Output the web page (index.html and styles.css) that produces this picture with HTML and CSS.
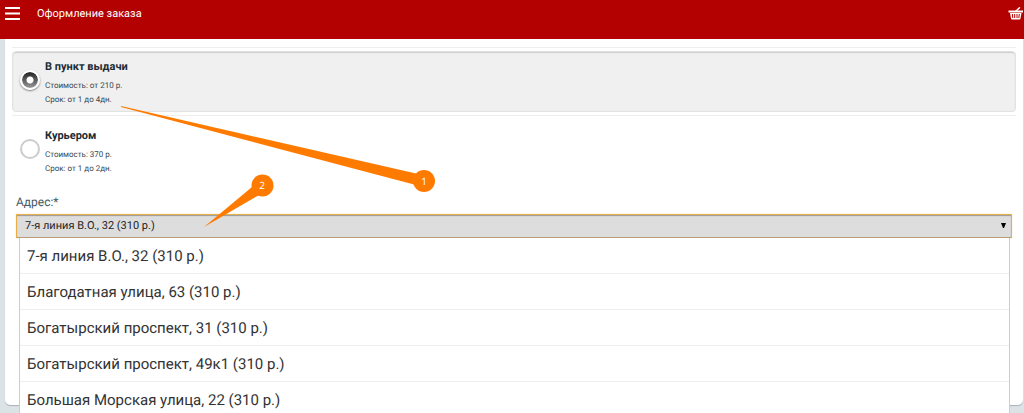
FILE: index.html
```html
<!DOCTYPE html>
<html lang="ru">
<head>
    <meta charset="UTF-8">
    <meta name="viewport" content="width=device-width, initial-scale=1">
    <title>Оформление заказа</title>
    <link rel="stylesheet" href="styles.css">
</head>
<body>
    <header class="topbar">
        <button type="button" class="icon-button" aria-label="Меню">
            <svg width="16" height="14" viewBox="0 0 16 14">
                <path d="M0 1h15M0 6.500h15M0 12h15" stroke="#fff" stroke-width="2" fill="none"/>
            </svg>
        </button>
        <h1>Оформление заказа</h1>
        <a href="#" class="cart" aria-label="Корзина">
            <svg width="16" height="14" viewBox="0 0 16 14">
                <path d="M8 4L11.500 .8" stroke="#fff" stroke-width="1.500" stroke-linecap="round" fill="none"/>
                <path d="M.5 3.500h14.500v2H.5z" fill="#fff"/>
                <path d="M2 6h11.500l-1 5.500q-.2 1-1 1H4q-.8 0-1-1z" fill="#fff"/>
                <path d="M4.300 7l.5 4M6.700 7v4M9 7v4M11.300 7l-.5 4" stroke="#b30000" stroke-width="1" fill="none"/>
            </svg>
        </a>
    </header>

    <form class="card">
        <div class="deliveries">
            <div class="delivery">
                <label class="option option-active">
                    <input type="radio" name="delivery" value="pickup" checked>
                    <span class="option-text">
                        <b>В пункт выдачи</b>
                        <span>Стоимость: от 210 р.</span>
                        <span>Срок: от 1 до 4дн.</span>
                    </span>
                </label>
            </div>
            <div class="delivery">
                <label class="option">
                    <input type="radio" name="delivery" value="courier">
                    <span class="option-text">
                        <b>Курьером</b>
                        <span>Стоимость: 370 р.</span>
                        <span>Срок: от 1 до 2дн.</span>
                    </span>
                </label>
            </div>
        </div>

        <div class="field">
            <label for="address">Адрес:*</label>
            <div class="select-box">
                <select id="address" name="address">
                    <option>7-я линия В.О., 32 (310 р.)</option>
                    <option>Благодатная улица, 63 (310 р.)</option>
                    <option>Богатырский проспект, 31 (310 р.)</option>
                    <option>Богатырский проспект, 49к1 (310 р.)</option>
                    <option>Большая Морская улица, 22 (310 р.)</option>
                </select>
                <svg class="arrow" width="5" height="5" viewBox="0 0 5 5">
                    <path d="M0 0h5L3 5H2z" fill="#000"/>
                </svg>
                <ul class="dropdown">
                    <li><button type="button">7-я линия В.О., 32 (310 р.)</button></li>
                    <li><button type="button">Благодатная улица, 63 (310 р.)</button></li>
                    <li><button type="button">Богатырский проспект, 31 (310 р.)</button></li>
                    <li><button type="button">Богатырский проспект, 49к1 (310 р.)</button></li>
                    <li><button type="button">Большая Морская улица, 22 (310 р.)</button></li>
                </ul>
            </div>
        </div>
    </form>

    <svg class="callouts" width="450" height="240" viewBox="0 0 450 240">
        <g fill="#ff7b00">
            <path d="M121 106L416 173.500L414 184.500L121 107Z"/>
            <circle cx="424" cy="181" r="11"/>
            <path d="M204 227L252 187L259 195Z"/>
            <circle cx="262.500" cy="185.500" r="11"/>
        </g>
        <text x="424" y="185">1</text>
        <text x="262" y="189">2</text>
    </svg>

    <script>
        const select = document.getElementById("address");
        document.querySelectorAll(".dropdown button").forEach((button, i) => {
            button.addEventListener("click", () => {
                select.selectedIndex = i;
            });
        });
    </script>
</body>
</html>
```
FILE: styles.css
```css
* {
    box-sizing: border-box;
}
body {
    margin: 0;
    min-height: 100vh;
    background: #dce3e7;
    color: #263238;
    font-family: Roboto, "Liberation Sans", sans-serif;
    text-rendering: geometricPrecision;
    overflow: hidden;
}
button, select {
    font-family: inherit;
    text-rendering: inherit;
}
.topbar {
    display: flex;
    align-items: flex-start;
    height: 39px;
    padding: 7px 0 0 5px;
    background: #b30000;
    color: #fff;
}
.topbar h1 {
    margin: 0 auto 0 16px;
    font-size: 11px;
    line-height: 14px;
    font-weight: 400;
}
.icon-button {
    display: flex;
    padding: 0;
    border: none;
    background: none;
}
.cart {
    display: flex;
}
.card {
    margin: 0 1px 8px 5px;
    padding: 8px 7px 167px;
    background: #fff;
    border-radius: 0 0 5px 5px;
    box-shadow: 0 1px 1px #aab0b3;
}
.delivery {
    padding: 3px 0;
    border-top: 1px solid #eee;
}
.delivery + .delivery {
    padding-top: 4px;
}
.option {
    display: flex;
    align-items: flex-start;
    gap: 5px;
    padding: 8px 7px 4px;
    border: 1px solid transparent;
    border-radius: 4px;
}
.option-active {
    border-color: #e2e2e2;
    background: #f0f0f0;
    box-shadow: inset 0 1px 1px #ccc;
}
.option input {
    appearance: none;
    flex: none;
    width: 20px;
    height: 20px;
    margin: 10px 0 0;
    border: 2px solid #ccc;
    border-radius: 50%;
    background: #fff;
}
.option input:checked {
    border-color: #fff;
    background: radial-gradient(circle, #fff 0 3px, transparent 4px), linear-gradient(#222, #999);
    background-clip: padding-box;
    box-shadow: 0 1px 2px #777;
}
.option-text {
    display: flex;
    flex-direction: column;
    font-size: 8px;
    line-height: 14px;
    color: #37474f;
}
.option-text b {
    margin-bottom: 5px;
    font-size: 11px;
    color: #1c2b33;
}
.field {
    padding: 10px 4px 0;
}
.field > label {
    display: block;
    margin-bottom: 4px;
    font-size: 12px;
    line-height: 16px;
    color: #455a64;
}
.select-box {
    position: relative;
}
.select-box select {
    appearance: none;
    display: block;
    width: 100%;
    height: 24px;
    padding: 0 20px 1px 8px;
    border: 1px solid #e9b04a;
    border-bottom-color: #b99a74;
    border-radius: 1px;
    background: #ddd;
    box-shadow: inset 0 1px 1px #999, 0 0 1px #e9b04a;
    color: #222;
    font-size: 11px;
    outline: none;
}
.arrow {
    position: absolute;
    top: 9px;
    right: 6px;
    pointer-events: none;
}
.dropdown {
    position: absolute;
    top: 100%;
    left: 3px;
    right: 2px;
    margin: 0;
    padding: 0;
    list-style: none;
    background: #fff;
    border: solid #ccc;
    border-width: 0 1px;
}
.dropdown li + li {
    border-top: 1px solid #eee;
}
.dropdown button {
    display: block;
    width: 100%;
    height: 35px;
    padding: 0 7px;
    border: none;
    background: none;
    color: #333;
    font-size: 15px;
    text-align: left;
}
/* numbered pointers over the page */
.callouts {
    position: absolute;
    top: 0;
    left: 0;
    pointer-events: none;
}
.callouts text {
    fill: #fff;
    font-family: "Open Sans", sans-serif;
    font-size: 10px;
    text-anchor: middle;
}
```
